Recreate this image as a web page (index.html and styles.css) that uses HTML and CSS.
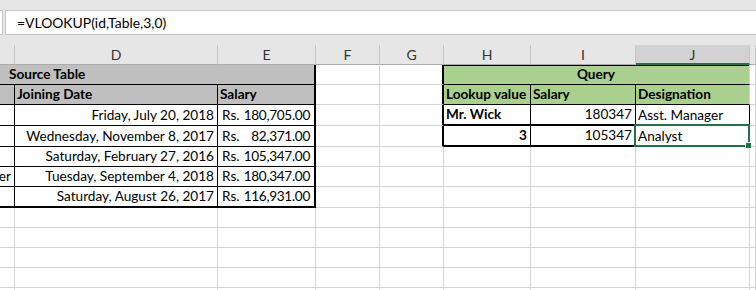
FILE: index.html
```html
<!DOCTYPE html>
<html lang="en">
<head>
    <meta charset="UTF-8">
    <title>VLOOKUP - Query</title>
    <link rel="stylesheet" href="styles.css">
</head>
<body>

    <!-- Formula bar -->
    <div class="chrome">
        <div class="formula-row">
            <div class="name-box"></div>
            <div class="formula-input">=VLOOKUP(id,Table,3,0)</div>
        </div>
    </div>

    <!-- Column headers -->
    <div class="col-headers">
        <div class="ch"></div>
        <div class="ch">D</div>
        <div class="ch">E</div>
        <div class="ch">F</div>
        <div class="ch">G</div>
        <div class="ch">H</div>
        <div class="ch">I</div>
        <div class="ch selected">J</div>
        <div class="ch"></div>
    </div>

    <!-- Sheet cells -->
    <div class="sheet">
        <!-- row 1 -->
        <div class="c span3 gray b bk-b thick-r title-left">Source Table</div>
        <div class="c"></div>
        <div class="c thick-r"></div>
        <div class="c span3 green b bk-b center query-top">Query</div>
        <div class="c"></div>

        <!-- row 2 -->
        <div class="c gray bk-r bk-b"></div>
        <div class="c gray b bk-r bk-b">Joining Date</div>
        <div class="c gray b thick-r bk-b">Salary</div>
        <div class="c"></div>
        <div class="c thick-r"></div>
        <div class="c green b bk-r bk-b">Lookup value</div>
        <div class="c green b bk-r bk-b">Salary</div>
        <div class="c green b bk-b">Designation</div>
        <div class="c"></div>

        <!-- row 3 -->
        <div class="c bk-r bk-b"></div>
        <div class="c r bk-r bk-b">Friday, July 20, 2018</div>
        <div class="c money thick-r bk-b"><span>Rs.</span><span>180,705.00</span></div>
        <div class="c"></div>
        <div class="c thick-r"></div>
        <div class="c b bk-r thick-b">Mr. Wick</div>
        <div class="c r bk-r thick-b">180347</div>
        <div class="c bk-r bk-b">Asst. Manager</div>
        <div class="c"></div>

        <!-- row 4 -->
        <div class="c bk-r bk-b"></div>
        <div class="c r bk-r bk-b">Wednesday, November 8, 2017</div>
        <div class="c money thick-r bk-b"><span>Rs.</span><span>82,371.00</span></div>
        <div class="c"></div>
        <div class="c thick-r"></div>
        <div class="c b r bk-r thick-b">3</div>
        <div class="c r bk-r thick-b">105347</div>
        <div class="c active">Analyst<div class="sel-box"><div class="handle"></div></div></div>
        <div class="c"></div>

        <!-- row 5 -->
        <div class="c bk-r bk-b"></div>
        <div class="c r bk-r bk-b">Saturday, February 27, 2016</div>
        <div class="c money thick-r bk-b"><span>Rs.</span><span>105,347.00</span></div>
        <div class="c"></div>
        <div class="c"></div>
        <div class="c"></div>
        <div class="c"></div>
        <div class="c"></div>
        <div class="c"></div>

        <!-- row 6 -->
        <div class="c r bk-r bk-b">Manager</div>
        <div class="c r bk-r bk-b">Tuesday, September 4, 2018</div>
        <div class="c money thick-r bk-b"><span>Rs.</span><span>180,347.00</span></div>
        <div class="c"></div>
        <div class="c"></div>
        <div class="c"></div>
        <div class="c"></div>
        <div class="c"></div>
        <div class="c"></div>

        <!-- row 7 -->
        <div class="c bk-r thick-b"></div>
        <div class="c r bk-r thick-b">Saturday, August 26, 2017</div>
        <div class="c money thick-r thick-b"><span>Rs.</span><span>116,931.00</span></div>
        <div class="c"></div>
        <div class="c"></div>
        <div class="c"></div>
        <div class="c"></div>
        <div class="c"></div>
        <div class="c"></div>

        <!-- empty rows -->
        <div class="c"></div><div class="c"></div><div class="c"></div><div class="c"></div><div class="c"></div><div class="c"></div><div class="c"></div><div class="c"></div><div class="c"></div>
        <div class="c"></div><div class="c"></div><div class="c"></div><div class="c"></div><div class="c"></div><div class="c"></div><div class="c"></div><div class="c"></div><div class="c"></div>
        <div class="c"></div><div class="c"></div><div class="c"></div><div class="c"></div><div class="c"></div><div class="c"></div><div class="c"></div><div class="c"></div><div class="c"></div>
        <div class="c"></div><div class="c"></div><div class="c"></div><div class="c"></div><div class="c"></div><div class="c"></div><div class="c"></div><div class="c"></div><div class="c"></div>
        <div class="c"></div><div class="c"></div><div class="c"></div><div class="c"></div><div class="c"></div><div class="c"></div><div class="c"></div><div class="c"></div><div class="c"></div>
    </div>

</body>
</html>
```

FILE: styles.css
```css
* {
    box-sizing: border-box;
}

body {
    margin: 0;
    width: 756px;
    height: 290px;
    overflow: hidden;
    background-color: #fff;
    font-family: Lato, "Liberation Sans", sans-serif;
    font-size: 13.6px;
    color: #000;
}

/* Formula bar area */
.chrome {
    background-color: #e6e6e6;
    padding: 10px 0;
}

.formula-row {
    display: flex;
    gap: 2px;
    height: 25px;
}

.name-box {
    width: 3px;
    background-color: #fff;
    border: 1px solid #c6c6c6;
    border-left: none;
}

.formula-input {
    flex: 1;
    display: flex;
    align-items: center;
    padding-left: 11px;
    font-size: 13.9px;
    background-color: #fff;
    border: 1px solid #c6c6c6;
    border-right: none;
}

/* Shared column widths */
.col-headers,
.sheet {
    display: grid;
    grid-template-columns: 15px 203px 98px 64px 64px 87px 105px 114px 1fr;
}

.col-headers {
    height: 20px;
    background-color: #e6e6e6;
}

.ch {
    display: flex;
    align-items: center;
    justify-content: center;
    color: #333;
    font-size: 14px;
    border-right: 1px solid #c8c8c8;
    border-bottom: 1px solid #ababab;
}

.ch.selected {
    background-color: #d2d2d2;
    border-bottom: 2px solid #217346;
}

/* Grid of cells */
.sheet {
    grid-template-rows: 20px 20px 21px 21px 20px 20px 21px 20px 20px 20px 20px 20px;
}

.c {
    display: flex;
    align-items: flex-end;
    padding: 0 3px 2px 2px;
    line-height: 16px;
    white-space: nowrap;
    overflow: hidden;
    border-right: 1px solid #d4d4d4;
    border-bottom: 1px solid #d4d4d4;
}

.span3 {
    grid-column: span 3;
}

.r {
    justify-content: flex-end;
}

.center {
    justify-content: center;
}

.b {
    font-weight: bold;
}

.gray {
    background-color: #bfbfbf;
}

.green {
    background-color: #a9d08e;
}

.bk-r {
    border-right-color: #000;
}

.bk-b {
    border-bottom-color: #000;
}

.thick-r {
    border-right: 2px solid #000;
}

.thick-b {
    border-bottom: 2px solid #000;
}

.title-left {
    padding-left: 9px;
}

.query-top {
    box-shadow: inset 0 1px 0 #000;
}

/* Accounting format: currency left, amount right */
.money {
    justify-content: space-between;
    padding-left: 4px;
    padding-right: 4px;
}

.money span:last-child {
    letter-spacing: -0.3px;
}

/* Active cell selection */
.active {
    position: relative;
    overflow: visible;
}

.sel-box {
    position: absolute;
    left: -2px;
    top: -2px;
    right: -1px;
    bottom: -1px;
    border: 2px solid #217346;
}

.handle {
    position: absolute;
    right: -4px;
    bottom: -4px;
    width: 7px;
    height: 7px;
    background-color: #217346;
    border: 1px solid #fff;
}
```
